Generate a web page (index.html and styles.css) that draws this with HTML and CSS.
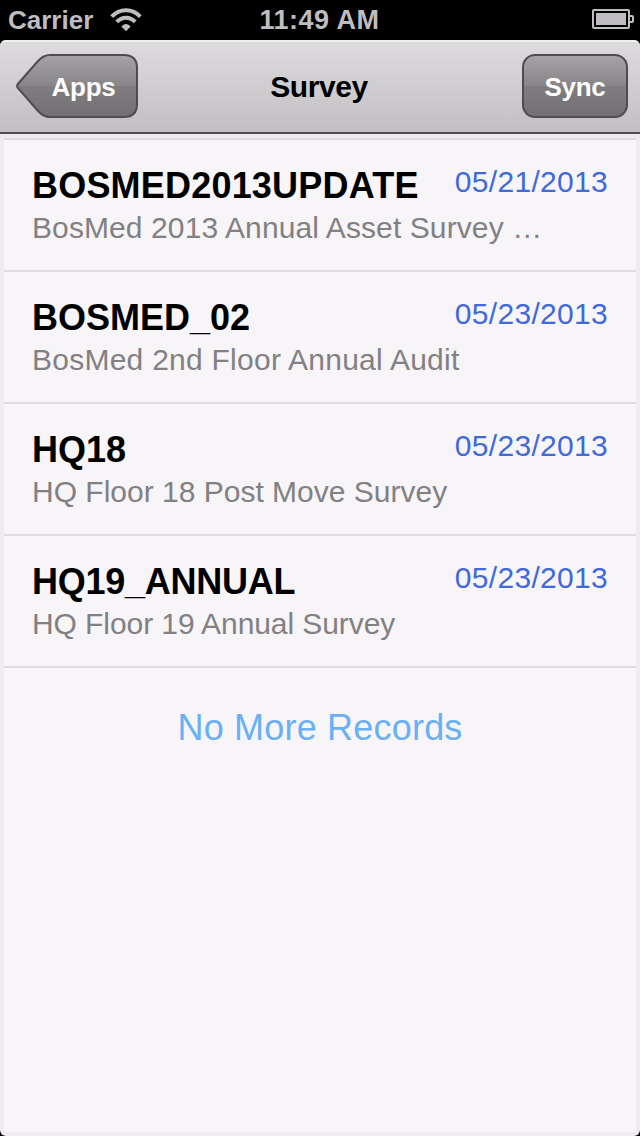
FILE: index.html
```html
<!DOCTYPE html>
<html lang="en">
<head>
  <meta charset="UTF-8" />
  <meta name="viewport" content="width=device-width, initial-scale=1.0" />
  <title>Survey</title>
  <link rel="stylesheet" href="styles.css">
</head>
<body>
  <div class="status-bar">
    <div class="carrier">
      <span>Carrier</span>
      <svg class="wifi" width="32" height="24" viewBox="0 0 32 24" fill="none" stroke="#bfbdbf" stroke-width="4">
        <path d="M1.7 8.6 C9.5 0 22.5 0 30.3 8.6" />
        <path d="M6.8 13.9 C12 8.4 20 8.4 25.2 13.9" />
        <path d="M16 23.2 L11.4 18.6 C14 15 18 15 20.6 18.6 Z" fill="#bfbdbf" stroke="none" />
      </svg>
    </div>
    <div class="clock">11:49 AM</div>
    <svg class="battery" width="42" height="20" viewBox="0 0 42 20">
      <rect x="1" y="1" width="36" height="18" rx="1" fill="none" stroke="#bfbdbf" stroke-width="2" />
      <rect x="4" y="4" width="30" height="12" fill="#bfbdbf" />
      <path d="M38 7 H40 Q41 7 41 8 V12 Q41 13 40 13 H38" fill="none" stroke="#bfbdbf" stroke-width="2" />
    </svg>
  </div>

  <div class="screen">
    <header class="navbar">
      <button class="back-button">
        <svg class="back-shape" width="122" height="64" viewBox="0 0 122 64">
          <defs>
            <linearGradient id="buttonFill" x1="0" y1="0" x2="0" y2="1">
              <stop offset="0" stop-color="#a5a3a5" />
              <stop offset="0.5" stop-color="#878587" />
              <stop offset="0.5" stop-color="#7f7d7f" />
              <stop offset="1" stop-color="#727072" />
            </linearGradient>
          </defs>
          <path d="M1.8 30 L22 7 Q27.5 1 34 1 H108 Q121 1 121 14 V50 Q121 63 108 63 H34 Q27.5 63 22 57 L1.8 34 Q0.4 32 1.8 30 Z" fill="url(#buttonFill)" stroke="#4e4c4e" stroke-width="2" />
        </svg>
        <span>Apps</span>
      </button>
      <h1>Survey</h1>
      <button class="sync-button">Sync</button>
    </header>

    <ul class="survey-list">
      <li>
        <div class="row">
          <h2>BOSMED2013UPDATE</h2>
          <span class="date">05/21/2013</span>
        </div>
        <p>BosMed 2013 Annual Asset Survey …</p>
      </li>
      <li>
        <div class="row">
          <h2>BOSMED_02</h2>
          <span class="date">05/23/2013</span>
        </div>
        <p>BosMed 2nd Floor Annual Audit</p>
      </li>
      <li>
        <div class="row">
          <h2>HQ18</h2>
          <span class="date">05/23/2013</span>
        </div>
        <p>HQ Floor 18 Post Move Survey</p>
      </li>
      <li>
        <div class="row">
          <h2>HQ19_ANNUAL</h2>
          <span class="date">05/23/2013</span>
        </div>
        <p>HQ Floor 19 Annual Survey</p>
      </li>
    </ul>
    <div class="no-more">No More Records</div>
  </div>
</body>
</html>
```
FILE: styles.css
```css
* {
  box-sizing: border-box;
}

body {
  margin: 0;
  height: 1136px;
  display: flex;
  flex-direction: column;
  background: #000;
  font-family: "Liberation Sans", Arial, sans-serif;
  overflow: hidden;
}

h1, h2, p, ul {
  margin: 0;
  padding: 0;
}

.status-bar {
  height: 40px;
  padding: 0 6px 0 8px;
  display: grid;
  grid-template-columns: 1fr auto 1fr;
  align-items: center;
  color: #bfbdbf;
  font-size: 27px;
  font-weight: bold;
  line-height: 40px;
}

.carrier {
  display: flex;
  align-items: center;
  gap: 17px;
  font-size: 26px;
}

.clock {
  letter-spacing: 0.5px;
  margin-right: 3px;
}

.battery {
  justify-self: end;
  margin-top: -2px;
}

.screen {
  flex: 1;
  display: flex;
  flex-direction: column;
  background: #eeecee;
  border-radius: 6px;
  overflow: hidden;
}

.navbar {
  height: 94px;
  padding: 12px 12px 0 16px;
  display: grid;
  grid-template-columns: 1fr auto 1fr;
  align-items: start;
  background: linear-gradient(#dddbdd, #c1bfc1);
  border-top: 2px solid #efeeef;
  border-bottom: 2px solid #4f4d4f;
}

.navbar h1 {
  font-size: 30px;
  line-height: 66px;
  letter-spacing: -0.4px;
  margin-right: 6px;
}

button {
  height: 64px;
  border: none;
  color: #fff;
  font-family: inherit;
  font-size: 26px;
  font-weight: bold;
  line-height: 66px;
  padding: 0;
}

.back-button {
  width: 122px;
  position: relative;
  background: none;
}

.back-shape {
  position: absolute;
  top: 0;
  left: 0;
}

.back-button span {
  position: relative;
  padding-left: 13px;
  letter-spacing: -0.3px;
}

.sync-button {
  width: 106px;
  justify-self: end;
  line-height: 62px;
  letter-spacing: -0.3px;
  border: 2px solid #4e4c4e;
  border-radius: 13px;
  background: linear-gradient(#a5a3a5, #878587 50%, #7f7d7f 50%, #727072);
}

.survey-list {
  margin: 4px 4px 0;
  background: #f7f5f8;
  border-top: 2px solid #dddbde;
  list-style: none;
}

.survey-list li {
  height: 132px;
  padding: 24px 28px 0;
  border-bottom: 2px solid #dddbde;
}

.row {
  display: flex;
  justify-content: space-between;
}

.survey-list h2 {
  font-size: 36px;
  line-height: 44px;
}

.date {
  color: #4169d9;
  font-size: 30px;
  line-height: 36px;
  letter-spacing: 0.3px;
}

.survey-list p {
  color: #828083;
  font-size: 30px;
  line-height: 40px;
}

.survey-list li:nth-child(1) h2 {
  letter-spacing: 0.2px;
}

.survey-list li:nth-child(4) h2 {
  letter-spacing: -0.25px;
}

.survey-list li:nth-child(1) p {
  letter-spacing: 0.1px;
}

.survey-list li:nth-child(2) p {
  letter-spacing: 0.25px;
}

.survey-list li:nth-child(4) p {
  letter-spacing: -0.08px;
}

.no-more {
  flex: 1;
  margin: 0 4px 4px;
  padding-top: 38px;
  background: #f7f5f8;
  color: #69b0f5;
  font-size: 36px;
  line-height: 44px;
  letter-spacing: 0.2px;
  text-align: center;
}
```
